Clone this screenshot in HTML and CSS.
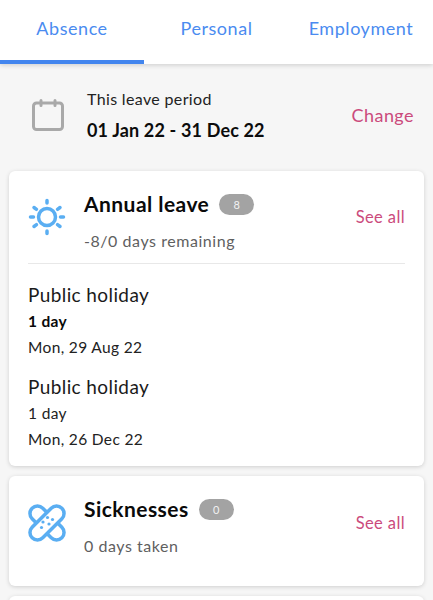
FILE: index.html
```html
<!DOCTYPE html>
<html lang="en">
<head>
<meta charset="utf-8">
<title>Absence</title>
<link rel="stylesheet" href="styles.css">
</head>
<body>
<nav class="tabs">
  <a class="tab tab-active">Absence</a>
  <a class="tab">Personal</a>
  <a class="tab">Employment</a>
</nav>
<section class="period">
  <svg class="period-icon" viewBox="0 0 32 32" fill="none" stroke="#a9a9a9" stroke-width="3" stroke-linecap="round" stroke-linejoin="round">
    <rect x="1.500" y="4" width="29" height="26.500" rx="3"/>
    <path d="M9 1.500v5M23 1.500v5"/>
  </svg>
  <div class="period-text">
    <div class="period-label">This leave period</div>
    <div class="period-dates">01 Jan 22 - 31 Dec 22</div>
  </div>
  <a class="link period-link">Change</a>
</section>
<main class="cards">
  <article class="card card-annual">
    <header class="card-head">
      <svg class="card-icon" viewBox="0 0 38 38" fill="none" stroke="#5aaef2" stroke-width="3.500" stroke-linecap="round">
        <circle cx="19" cy="19" r="8.500"/>
        <path d="M19 2.500v2.500M19 33v2.500M2.500 19h3M32.500 19h3M6 9.500l2.500 1.800M32 9.500l-2.500 1.800M6 28.500l2.500-1.800M32 28.500l-2.500-1.800"/>
      </svg>
      <div class="card-title-block">
        <div class="card-title-row"><h2 class="card-title">Annual leave</h2><span class="badge">8</span></div>
        <div class="card-sub">-8/0 days remaining</div>
      </div>
      <a class="link">See all</a>
    </header>
    <div class="entries">
      <div class="entry">
        <div class="entry-name">Public holiday</div>
        <div class="entry-line entry-strong">1 day</div>
        <div class="entry-line">Mon, 29 Aug 22</div>
      </div>
      <div class="entry">
        <div class="entry-name">Public holiday</div>
        <div class="entry-line entry-first">1 day</div>
        <div class="entry-line">Mon, 26 Dec 22</div>
      </div>
    </div>
  </article>
  <article class="card card-short">
    <header class="card-head card-head-plain">
      <svg class="card-icon" viewBox="0 0 38 38" fill="#fff" stroke="#5aaef2" stroke-width="3.500">
        <rect x="-2" y="11.500" width="42" height="15" rx="7.500" transform="rotate(45 19 19)"/>
        <rect x="-2" y="11.500" width="42" height="15" rx="7.500" transform="rotate(-45 19 19)"/>
        <g fill="#5aaef2" stroke="none">
          <circle cx="19.500" cy="13.500" r="1.600"/><circle cx="24.500" cy="15.500" r="1.600"/>
          <circle cx="15" cy="18" r="1.600"/><circle cx="21" cy="20" r="1.600"/><circle cx="13.500" cy="23.500" r="1.600"/>
        </g>
      </svg>
      <div class="card-title-block">
        <div class="card-title-row"><h2 class="card-title">Sicknesses</h2><span class="badge">0</span></div>
        <div class="card-sub">0 days taken</div>
      </div>
      <a class="link">See all</a>
    </header>
  </article>
  <article class="card card-next"></article>
</main>
</body>
</html>
```
FILE: styles.css
```css
* { box-sizing: border-box; }
html, body { margin: 0; height: 600px; overflow: hidden; }
body {
  background: #f6f6f6;
  font-family: "Lato", "Noto Sans", sans-serif;
  color: #111;
}
.tabs {
  display: grid;
  grid-template-columns: 144px 145px 144px;
  height: 64px;
  background: #fff;
  box-shadow: 0 1px 5px rgba(0,0,0,.18);
  position: relative;
}
.tab {
  display: flex;
  justify-content: center;
  padding-top: 17px;
  font-size: 18px;
  line-height: 22px;
  letter-spacing: .55px;
  color: #4a8bf0;
  white-space: nowrap;
}
.tab-active { border-bottom: 4px solid #4285ee; }
.period {
  display: flex;
  align-items: center;
  height: 97px;
  padding: 5px 19px 0 32px;
}
.period-icon { width: 32px; height: 32px; margin-right: 23px; flex: none; }
.period-text { flex: 1; }
.period-label { font-size: 16px; line-height: 20px; letter-spacing: .35px; color: #222; }
.period-dates { font-size: 18px; line-height: 22px; margin-top: 10px; font-weight: 700; color: #0c0c0c; letter-spacing: .15px; }
.link { font-size: 16.500px; line-height: 20px; letter-spacing: .4px; color: #cb4a7c; white-space: nowrap; }
.period-link { font-size: 18px; letter-spacing: .45px; }
.cards { display: flex; flex-direction: column; gap: 10px; padding: 10px 9px 0; }
.card {
  background: #fff;
  border-radius: 6px;
  box-shadow: 0 1px 4px rgba(0,0,0,.16);
  padding: 0 19px;
}
.card-annual { height: 295px; }
.card-short { height: 110px; }
.card-next { height: 60px; }
.card-head {
  display: flex;
  align-items: center;
  height: 93px;
  border-bottom: 1px solid #e8e8e8;
}
.card-head-plain { border-bottom: 0; }
.card-icon { flex: none; width: 38px; height: 38px; margin-right: 18px; }
.card-title-block { flex: 1; align-self: flex-start; padding-top: 21px; }
.card-title-row { display: flex; align-items: center; gap: 10px; }
.card-title { margin: 0; font-size: 21px; line-height: 24px; font-weight: 700; color: #0a0a0a; letter-spacing: .45px; }
.badge {
  display: inline-flex;
  justify-content: center;
  align-items: center;
  width: 35px;
  height: 21px;
  border-radius: 11px;
  background: #a3a3a3;
  color: #f2f2f2;
  font-size: 11px;
}
.card-sub { margin-top: 15px; font-size: 16px; line-height: 20px; color: #5f5f5f; letter-spacing: .55px; }
.entries { display: flex; flex-direction: column; gap: 18px; padding-top: 19px; }
.entry-name { font-size: 19px; line-height: 24px; letter-spacing: .4px; color: #1a1a1a; }
.entry-line { font-size: 15.500px; line-height: 20px; margin-top: 6px; color: #222; letter-spacing: .35px; }
.entry-strong, .entry-first { margin-top: 4px; }
.entry-strong { font-weight: 700; color: #0a0a0a; }
```
